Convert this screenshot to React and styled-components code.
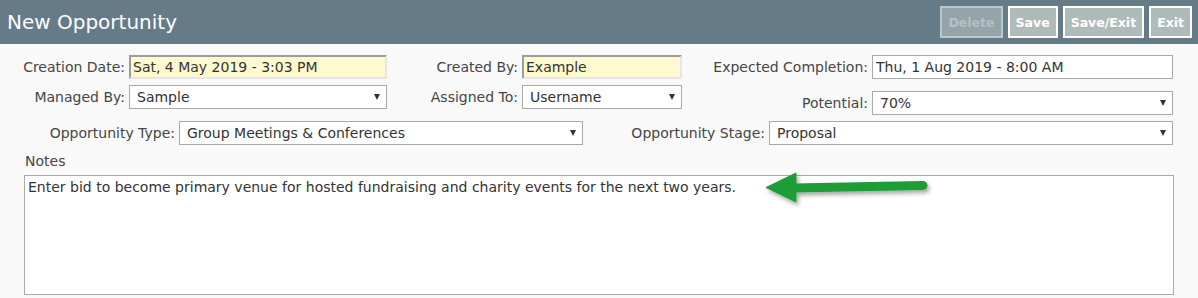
import React from "react";
import styled, { createGlobalStyle } from "styled-components";

const GlobalStyle = createGlobalStyle`
  html, body {
    margin: 0;
    padding: 0;
    background: #f9f9f9;
  }
  * {
    box-sizing: border-box;
  }
`;

function App() {
  return (
    <Page>
      <GlobalStyle />
      <Header>
        <Title>New Opportunity</Title>
        <Toolbar>
          <ToolButton disabled>Delete</ToolButton>
          <ToolButton>Save</ToolButton>
          <ToolButton>Save/Exit</ToolButton>
          <ToolButton>Exit</ToolButton>
        </Toolbar>
      </Header>

      <Form>
        <Row>
          <Field width={387}>
            <Label>Creation Date:</Label>
            <ReadOnlyInput width={258} readOnly defaultValue="Sat, 4 May 2019 - 3:03 PM" />
          </Field>
          <Field width={295}>
            <Label>Created By:</Label>
            <ReadOnlyInput width={160} readOnly defaultValue="Example" />
          </Field>
          <Field width={491}>
            <Label>Expected Completion:</Label>
            <TextInput width={301} defaultValue="Thu, 1 Aug 2019 - 8:00 AM" />
          </Field>
        </Row>

        <Row>
          <Field width={387}>
            <Label>Managed By:</Label>
            <Select width={258}>Sample</Select>
          </Field>
          <Field width={295}>
            <Label>Assigned To:</Label>
            <Select width={160}>Username</Select>
          </Field>
          <Field width={491} $shift={6}>
            <Label>Potential:</Label>
            <Select width={301}>70%</Select>
          </Field>
        </Row>

        <Row>
          <Field width={583}>
            <Label>Opportunity Type:</Label>
            <Select width={404}>Group Meetings &amp; Conferences</Select>
          </Field>
          <Field width={590}>
            <Label>Opportunity Stage:</Label>
            <Select width={404}>Proposal</Select>
          </Field>
        </Row>

        <NotesLabel>Notes</NotesLabel>
        <NotesWrap>
          <NotesArea
            readOnly
            defaultValue="Enter bid to become primary venue for hosted fundraising and charity events for the next two years."
          />
          <Arrow width="180" height="45" viewBox="0 0 180 45">
            <defs>
              <filter id="shadow" x="-20%" y="-40%" width="140%" height="200%">
                <feDropShadow dx="2" dy="3" stdDeviation="2" floodColor="#000" floodOpacity="0.35" />
              </filter>
            </defs>
            <g filter="url(#shadow)" fill="#1e9d34" stroke="#1e9d34">
              <line x1="34" y1="20" x2="163" y2="17.5" strokeWidth="9" strokeLinecap="round" />
              <polygon points="6,19.5 36,5 36,34" strokeWidth="1" strokeLinejoin="round" />
            </g>
          </Arrow>
        </NotesWrap>
      </Form>
    </Page>
  );
}

function Select({ width, children }) {
  return (
    <SelectBox width={width}>
      <SelectText>{children}</SelectText>
      <Caret />
    </SelectBox>
  );
}

export default App;

const Page = styled.div`
  width: 1198px;
  height: 298px;
  overflow: hidden;
  background: #f9f9f9;
  font-family: "DejaVu Sans", Verdana, sans-serif;
  font-size: 14px;
  color: #444;
`;

const Header = styled.div`
  height: 44px;
  background: #657b88;
  display: flex;
  align-items: center;
  justify-content: space-between;
  padding: 0 6px 0 7px;
`;

const Title = styled.h1`
  margin: 0;
  font-size: 20px;
  font-weight: normal;
  color: #fff;
`;

const Toolbar = styled.div`
  display: flex;
  gap: 5px;
  align-items: center;
`;

const ToolButton = styled.button`
  height: 32px;
  padding: 0 6px;
  font-family: "DejaVu Sans", Verdana, sans-serif;
  font-size: 12.5px;
  font-weight: bold;
  border: 2px solid ${({ disabled }) => (disabled ? "#bcc7ca" : "#ffffff")};
  background: ${({ disabled }) => (disabled ? "#94a4a9" : "#afbbb8")};
  color: ${({ disabled }) => (disabled ? "#b6c1c4" : "#ffffff")};
  cursor: ${({ disabled }) => (disabled ? "default" : "pointer")};
`;

const Form = styled.div`
  padding: 11px 0 0 0;
`;

const Row = styled.div`
  display: flex;
  align-items: flex-start;
  margin-bottom: 6px;
  &:nth-child(3) {
    margin-bottom: 0;
  }
`;

const Field = styled.div`
  width: ${({ width }) => width}px;
  display: flex;
  align-items: center;
  margin-top: ${({ $shift }) => $shift || 0}px;
`;

const Label = styled.label`
  flex: 1;
  text-align: right;
  padding-right: 4px;
  white-space: nowrap;
  color: #454545;
`;

const TextInput = styled.input`
  width: ${({ width }) => width}px;
  height: 24px;
  padding: 0 3px;
  border: 1px solid #a9a9a9;
  background: #fff;
  font-family: "DejaVu Sans", Verdana, sans-serif;
  font-size: 14px;
  color: #333;
  outline: none;
`;

const ReadOnlyInput = styled(TextInput)`
  padding: 0 2px;
  border-width: 2px;
  border-style: solid;
  border-color: #9c9c9c #e6e6e6 #e6e6e6 #9c9c9c;
  background: #fff9cf;
`;

const SelectBox = styled.div`
  width: ${({ width }) => width}px;
  height: 24px;
  border: 1px solid #a9a9a9;
  background: #fff;
  display: flex;
  align-items: center;
  padding: 0 6px 0 7px;
  color: #333;
`;

const SelectText = styled.span`
  flex: 1;
  white-space: nowrap;
  overflow: hidden;
`;

const Caret = styled.span`
  width: 0;
  height: 0;
  border-left: 3.5px solid transparent;
  border-right: 3.5px solid transparent;
  border-top: 6px solid #333;
`;

const NotesLabel = styled.div`
  margin: 7px 0 0 25px;
  line-height: 18px;
  color: #454545;
`;

const NotesWrap = styled.div`
  position: relative;
  margin: 5px 0 0 24px;
  width: 1150px;
`;

const NotesArea = styled.textarea`
  display: block;
  width: 1150px;
  height: 120px;
  resize: none;
  border: 1px solid #a9a9a9;
  background: #fff;
  padding: 3px 3px;
  font-family: "DejaVu Sans", Verdana, sans-serif;
  font-size: 14px;
  line-height: 17px;
  color: #333;
  outline: none;
`;

const Arrow = styled.svg`
  position: absolute;
  left: 736px;
  top: -7px;
  pointer-events: none;
`;
